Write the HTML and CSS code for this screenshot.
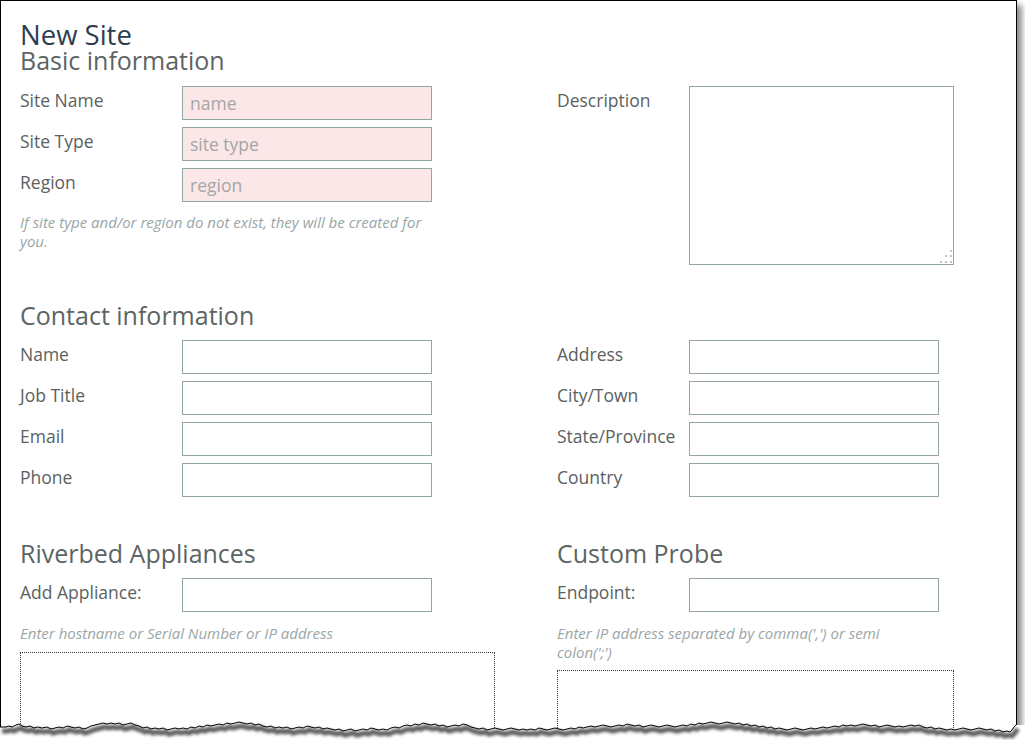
FILE: index.html
```html
<!DOCTYPE html>
<html lang="en">
<head>
    <meta charset="UTF-8">
    <meta name="viewport" content="width=device-width, initial-scale=1.0">
    <title>New Site</title>
    <link rel="stylesheet" href="styles.css">
</head>
<body>
<div class="page">
    <div class="sheet">
        <h1>New Site</h1>
        <h2 class="sub">Basic information</h2>
        <div class="section basic">
            <div class="col left">
                <div class="row"><label>Site Name</label><input class="required" placeholder="name"></div>
                <div class="row"><label>Site Type</label><input class="required" placeholder="site type"></div>
                <div class="row"><label>Region</label><input class="required" placeholder="region"></div>
                <p class="hint wide">If site type and/or region do not exist, they will be created for you.</p>
            </div>
            <div class="col right">
                <div class="row">
                    <label>Description</label>
                    <div class="area">
                        <textarea></textarea>
                        <svg class="grip" width="14" height="14" viewBox="0 0 14 14">
                            <g fill="#c2c4c4">
                                <rect x="11" y="0" width="2" height="2"/>
                                <rect x="6" y="5" width="2" height="2"/>
                                <rect x="11" y="5" width="2" height="2"/>
                                <rect x="1" y="11" width="2" height="2"/>
                                <rect x="6" y="11" width="2" height="2"/>
                                <rect x="11" y="11" width="2" height="2"/>
                            </g>
                        </svg>
                    </div>
                </div>
            </div>
        </div>

        <h2 class="section-title">Contact information</h2>
        <div class="section contact">
            <div class="col left">
                <div class="row"><label>Name</label><input></div>
                <div class="row"><label>Job Title</label><input></div>
                <div class="row"><label>Email</label><input></div>
                <div class="row"><label>Phone</label><input></div>
            </div>
            <div class="col right">
                <div class="row"><label>Address</label><input></div>
                <div class="row"><label>City/Town</label><input></div>
                <div class="row"><label>State/Province</label><input></div>
                <div class="row"><label>Country</label><input></div>
            </div>
        </div>

        <div class="section extras">
            <div class="col left">
                <h2>Riverbed Appliances</h2>
                <div class="row"><label>Add Appliance:</label><input></div>
                <p class="hint">Enter hostname or Serial Number or IP address</p>
                <div class="dropbox appliances"></div>
            </div>
            <div class="col right">
                <h2>Custom Probe</h2>
                <div class="row"><label>Endpoint:</label><input></div>
                <p class="hint narrow">Enter IP address separated by comma(',') or semi colon(';')</p>
                <div class="dropbox probes"></div>
            </div>
        </div>
    </div>

    <svg class="tear" width="1025" height="30" viewBox="0 0 1025 30">
        <defs>
            <filter id="soft" x="-5%" y="-100%" width="110%" height="300%">
                <feGaussianBlur stdDeviation="1.6"/>
            </filter>
        </defs>
        <path fill="#fff" d="M0,17 L6,17 L9,16 L12,17 L16,15 L19,14 L22,16 L26,17 L30,16 L34,18 L38,17 L42,18 L47,17 L51,19 L55,18 L59,17 L63,18 L67,16 L71,17 L75,18 L79,17 L83,19 L87,18 L91,16 L95,15 L99,14 L103,13 L107,14 L111,13 L115,14 L119,13 L123,15 L127,14 L131,13 L135,15 L139,16 L143,18 L147,17 L151,19 L155,18 L159,19 L163,18 L167,20 L171,19 L175,18 L179,19 L183,18 L187,19 L191,17 L195,18 L199,16 L203,17 L207,15 L211,16 L215,15 L219,14 L223,15 L227,13 L231,14 L235,13 L239,12 L243,13 L247,14 L251,13 L255,15 L259,14 L263,16 L267,17 L271,16 L275,18 L279,17 L283,18 L287,17 L291,19 L295,18 L299,17 L303,18 L307,16 L311,17 L315,18 L319,17 L323,19 L327,18 L331,19 L335,20 L339,19 L343,21 L347,20 L351,19 L355,21 L359,20 L363,19 L367,20 L371,18 L375,19 L379,20 L383,19 L387,20 L391,18 L395,17 L399,18 L403,16 L407,15 L411,16 L415,14 L419,15 L423,13 L427,14 L431,15 L435,14 L439,16 L443,15 L447,17 L451,16 L455,15 L459,16 L463,14 L467,15 L471,17 L475,18 L479,19 L483,18 L487,20 L491,19 L495,18 L499,19 L503,20 L507,19 L511,18 L515,19 L519,20 L523,19 L527,20 L531,19 L535,20 L539,18 L543,19 L547,20 L551,19 L555,18 L559,19 L563,20 L567,19 L571,18 L575,19 L579,17 L583,18 L587,17 L591,16 L595,17 L599,16 L603,15 L607,16 L611,17 L615,16 L619,15 L623,16 L627,14 L631,15 L635,16 L639,15 L643,17 L647,16 L651,15 L655,16 L659,17 L663,16 L667,15 L671,16 L675,17 L679,16 L683,15 L687,16 L691,14 L695,15 L699,13 L703,14 L707,13 L711,12 L715,13 L719,14 L723,13 L727,12 L731,13 L735,14 L739,13 L743,15 L747,14 L751,16 L755,15 L759,17 L763,16 L767,18 L771,17 L775,19 L779,18 L783,19 L787,20 L791,19 L795,18 L799,19 L803,20 L807,19 L811,18 L815,19 L819,18 L823,17 L827,18 L831,17 L835,16 L839,17 L843,15 L847,16 L851,15 L855,16 L859,15 L863,14 L867,15 L871,16 L875,15 L879,17 L883,16 L887,15 L891,16 L895,17 L899,16 L903,17 L907,16 L911,15 L915,16 L919,15 L923,17 L927,18 L931,17 L935,19 L939,18 L943,19 L947,20 L951,19 L955,20 L959,19 L963,18 L967,19 L971,20 L975,19 L979,18 L983,19 L987,20 L991,19 L995,21 L999,20 L1003,22 L1007,21 L1010,22 L1012,20 L1014,17 L1016,15 L1025,15 L1025,30 L0,30 Z"/>
        <path id="edge" fill="none" d="M0,17 L6,17 L9,16 L12,17 L16,15 L19,14 L22,16 L26,17 L30,16 L34,18 L38,17 L42,18 L47,17 L51,19 L55,18 L59,17 L63,18 L67,16 L71,17 L75,18 L79,17 L83,19 L87,18 L91,16 L95,15 L99,14 L103,13 L107,14 L111,13 L115,14 L119,13 L123,15 L127,14 L131,13 L135,15 L139,16 L143,18 L147,17 L151,19 L155,18 L159,19 L163,18 L167,20 L171,19 L175,18 L179,19 L183,18 L187,19 L191,17 L195,18 L199,16 L203,17 L207,15 L211,16 L215,15 L219,14 L223,15 L227,13 L231,14 L235,13 L239,12 L243,13 L247,14 L251,13 L255,15 L259,14 L263,16 L267,17 L271,16 L275,18 L279,17 L283,18 L287,17 L291,19 L295,18 L299,17 L303,18 L307,16 L311,17 L315,18 L319,17 L323,19 L327,18 L331,19 L335,20 L339,19 L343,21 L347,20 L351,19 L355,21 L359,20 L363,19 L367,20 L371,18 L375,19 L379,20 L383,19 L387,20 L391,18 L395,17 L399,18 L403,16 L407,15 L411,16 L415,14 L419,15 L423,13 L427,14 L431,15 L435,14 L439,16 L443,15 L447,17 L451,16 L455,15 L459,16 L463,14 L467,15 L471,17 L475,18 L479,19 L483,18 L487,20 L491,19 L495,18 L499,19 L503,20 L507,19 L511,18 L515,19 L519,20 L523,19 L527,20 L531,19 L535,20 L539,18 L543,19 L547,20 L551,19 L555,18 L559,19 L563,20 L567,19 L571,18 L575,19 L579,17 L583,18 L587,17 L591,16 L595,17 L599,16 L603,15 L607,16 L611,17 L615,16 L619,15 L623,16 L627,14 L631,15 L635,16 L639,15 L643,17 L647,16 L651,15 L655,16 L659,17 L663,16 L667,15 L671,16 L675,17 L679,16 L683,15 L687,16 L691,14 L695,15 L699,13 L703,14 L707,13 L711,12 L715,13 L719,14 L723,13 L727,12 L731,13 L735,14 L739,13 L743,15 L747,14 L751,16 L755,15 L759,17 L763,16 L767,18 L771,17 L775,19 L779,18 L783,19 L787,20 L791,19 L795,18 L799,19 L803,20 L807,19 L811,18 L815,19 L819,18 L823,17 L827,18 L831,17 L835,16 L839,17 L843,15 L847,16 L851,15 L855,16 L859,15 L863,14 L867,15 L871,16 L875,15 L879,17 L883,16 L887,15 L891,16 L895,17 L899,16 L903,17 L907,16 L911,15 L915,16 L919,15 L923,17 L927,18 L931,17 L935,19 L939,18 L943,19 L947,20 L951,19 L955,20 L959,19 L963,18 L967,19 L971,20 L975,19 L979,18 L983,19 L987,20 L991,19 L995,21 L999,20 L1003,22 L1007,21 L1010,22 L1012,20 L1014,17 L1016,15"/>
        <use href="#edge" stroke="#5e5e5e" stroke-width="5" transform="translate(2,4)" filter="url(#soft)"/>
        <use href="#edge" stroke="#000" stroke-width="1"/>
    </svg>
</div>
</body>
</html>
```

FILE: styles.css
```css
html, body {
    margin: 0;
    padding: 0;
    background-color: #fff;
    overflow: hidden;
}
body {
    font-family: "Open Sans", "Noto Sans", sans-serif;
    color: #5b6161;
}
.page {
    position: relative;
    width: 1025px;
    height: 740px;
    overflow: hidden;
}
.sheet {
    box-sizing: border-box;
    width: 1017px;
    height: 740px;
    border: 1px solid #000;
    border-bottom: none;
    box-shadow: 5px 5px 6px rgba(0, 0, 0, .45);
    padding: 21px 0 0 19px;
    background-color: #fff;
}
h1 {
    margin: 0;
    font-size: 27.5px;
    line-height: 26px;
    font-weight: 400;
    color: #2d3e4f;
}
h2 {
    margin: 0;
    font-size: 25px;
    line-height: 25px;
    font-weight: 400;
    color: #5d6464;
}
.section {
    display: flex;
}
.section.basic {
    margin-top: 13px;
}
.section-title {
    margin-top: 38px;
}
.section.contact {
    margin-top: 12px;
}
.section.extras {
    margin-top: 44px;
}
.col {
    display: flex;
    flex-direction: column;
    gap: 7px;
}
.col.left {
    width: 537px;
}
.col.right {
    flex: 1;
}
.extras .col {
    gap: 0;
}
.extras h2 {
    margin-bottom: 12px;
}
.row {
    display: flex;
    align-items: flex-start;
}
.row label {
    font-size: 17.5px;
    line-height: 28px;
    width: 162px;
    flex: none;
}
.right .row label {
    width: 132px;
}
input {
    box-sizing: border-box;
    width: 250px;
    height: 34px;
    margin: 0;
    padding: 0 7px;
    border: 1px solid #93a5a5;
    border-radius: 0;
    background-color: #fff;
    font-family: "Open Sans", sans-serif;
    font-size: 17.5px;
    color: #5b6161;
    outline: none;
}
input.required {
    background-color: #fbe6e8;
}
input::placeholder {
    color: #a4a6a9;
}
.area {
    position: relative;
    width: 265px;
    height: 179px;
}
textarea {
    display: block;
    box-sizing: border-box;
    width: 265px;
    height: 179px;
    margin: 0;
    border: 1px solid #93a5a5;
    border-radius: 0;
    resize: none;
    outline: none;
}
.grip {
    position: absolute;
    right: 1px;
    bottom: 1px;
}
.hint {
    margin: 4px 0 0;
    font-size: 15px;
    line-height: 19px;
    font-style: italic;
    color: #9aa6a6;
}
.hint.wide {
    max-width: 420px;
}
.hint.narrow {
    max-width: 345px;
}
.extras .hint {
    margin-top: 12px;
}
.dropbox {
    box-sizing: border-box;
    margin-top: 9px;
    height: 130px;
    border: 1px dotted #333;
}
.dropbox.appliances {
    width: 475px;
}
.dropbox.probes {
    width: 397px;
    margin-top: 8px;
}
.tear {
    position: absolute;
    left: 0;
    top: 710px;
}
```
